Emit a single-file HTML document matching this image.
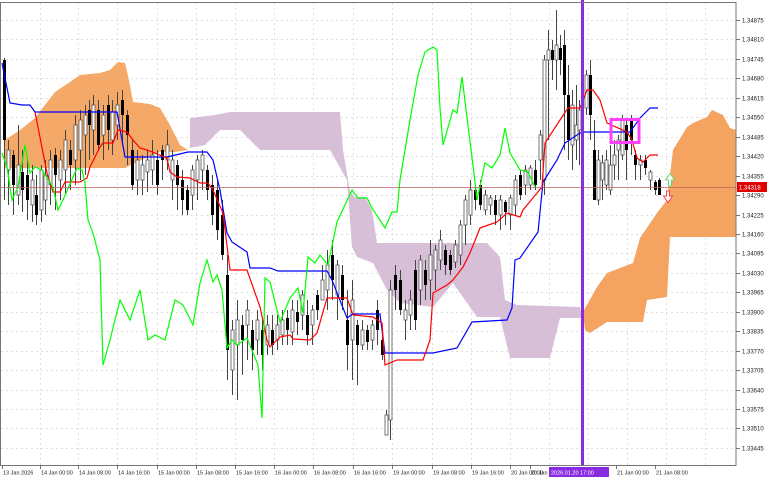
<!DOCTYPE html>
<html><head><meta charset="utf-8"><style>
html,body{margin:0;padding:0;background:#fff;width:768px;height:480px;overflow:hidden}
svg{display:block}
text{font-family:"Liberation Sans",sans-serif;font-size:6px;fill:#222}
text.b{font-size:5.5px}
</style></head><body>
<svg id="c" width="768" height="480" xmlns="http://www.w3.org/2000/svg">
<g id="grid"></g>
<polygon fill="#f4a460" opacity="0.95" points="5,140 20,130 35,118 55,92 70,82 80,75 100,73 110,70 118,62 125,63 129,80 133,102 150,104 160,108 170,125 180,145 188,150 175,152 160,152 150,156 125,168 60,168 5,168"/>
<polygon fill="#d8bfd8" points="190,118 215,115 230,112 340,112 343,150 350,192 355,197 365,197 372,210 377,243 487,243 500,257 505,300 517,305 580,307 582,318 560,318 550,358 510,358 500,317 477,317 453,283 433,307 400,303 387,290 373,263 357,257 352,247 347,180 330,150 260,150 240,130 220,130 205,145 190,148"/>
<polygon fill="#f4a460" points="583,312 597,287 607,273 633,263 640,238 657,213 667,200 673,150 687,127 693,123 707,117 712,110 723,115 730,128 736,130 736,237 670,237 667,297 647,300 643,322 607,322 590,333 585,330"/>
<g id="candles"></g>
<polyline fill="none" stroke="#0000ff" stroke-width="1.2" points="2,63 10,103 22,105 30,105 35,112 117,112 125,157 167,157 188,152 207,152 213,160 220,190 227,233 232,242 247,252 250,268 270,268 278,271 327,271 332,280 347,318 353,314 380,314 385,353 433,353 457,348 472,322 507,320 512,308 515,260 520,258 538,232 543,182 557,160 565,143 580,133 583,132 630,132 640,118 650,108 658,108"/>
<polyline fill="none" stroke="#ff0000" stroke-width="1.2" points="35,112 47,173 53,192 60,192 65,182 80,182 87,178 90,167 100,147 103,143 113,143 118,130 127,132 133,140 140,148 147,150 167,158 170,172 177,177 190,178 200,183 208,183 213,190 223,213 230,270 247,270 260,307 267,340 270,347 280,337 290,335 293,339 310,340 317,333 327,298 347,298 353,315 373,317 382,323 385,365 397,360 423,360 430,340 433,293 447,285 453,280 463,267 470,253 480,228 497,222 507,213 520,217 523,210 537,193 542,187 545,143 560,120 568,108 580,108 587,90 593,90 600,100 607,123 627,132 632,140 637,158 643,162 650,155 658,155"/>
<polyline fill="none" stroke="#00ff00" stroke-width="1.2" points="2,153 7,167 12,200 18,187 25,145 30,173 35,167 42,170 53,187 58,210 63,200 77,168 82,170 85,183 88,220 93,233 100,260 103,365 110,340 120,300 130,320 140,290 148,340 155,335 165,340 175,300 183,305 193,325 200,283 207,260 213,282 217,275 222,290 227,348 232,340 237,345 247,338 258,365 262,418 265,278 270,282 280,322 290,298 298,288 303,313 308,257 315,263 320,255 328,265 337,222 352,190 358,198 367,198 372,208 385,228 392,212 397,212 400,180 410,120 418,75 425,52 433,47 437,50 440,108 443,145 453,110 457,113 462,77 475,182 477,200 485,163 492,168 500,155 505,128 510,153 520,170 528,172 535,187"/>
<line x1="0" y1="187.5" x2="736" y2="187.5" stroke="#b86060" stroke-width="0.8"/>
<rect x="581" y="0" width="3" height="465" fill="#8a2be2"/>
<rect x="611" y="119.5" width="28" height="23" fill="none" stroke="#ff40ff" stroke-width="3"/>
<path d="M668.5,186 L668.5,180 L665.5,180 L670,173.5 L674.5,180 L671.5,180 L671.5,186 Z" fill="#fff" stroke="#6fd66f" stroke-width="1"/>
<path d="M666.5,191 L666.5,196 L663.5,196 L668,202.5 L672.5,196 L669.5,196 L669.5,191 Z" fill="#fff" stroke="#ff4040" stroke-width="1"/>
<rect x="0.5" y="2.5" width="735.5" height="463" fill="none" stroke="#777" stroke-width="1"/>
<g id="axis"></g>
<rect x="737" y="182" width="30" height="10" fill="#e00000"/>
<text x="739" y="189.5" style="fill:#fff">1.34318</text>
<rect x="549" y="467" width="60" height="10" fill="#8a2be2"/>
<text class="b" x="551" y="474.5" style="fill:#fff">2026.01.20 17:00</text>
</svg>
<script>
var NS="http://www.w3.org/2000/svg";
function el(p,t,a){var e=document.createElementNS(NS,t);for(var k in a)e.setAttribute(k,a[k]);p.appendChild(e);return e;}
var g=document.getElementById('grid'),ax=document.getElementById('axis');
var prices=["1.34875","1.34810","1.34745","1.34680","1.34615","1.34550","1.34485","1.34420","1.34355","1.34290","1.34225","1.34160","1.34095","1.34030","1.33965","1.33900","1.33835","1.33770","1.33705","1.33640","1.33575","1.33510","1.33445"];
prices.forEach(function(p,i){var y=Math.round(20+i*19.45)+0.5;
 el(g,'line',{x1:1,y1:y,x2:736,y2:y,stroke:'#d4d4d4','stroke-dasharray':'2,3','stroke-width':0.7});
 el(ax,'line',{x1:736,y1:y,x2:740,y2:y,stroke:'#555','stroke-width':0.8});
 var t=el(ax,'text',{x:742,y:y+2.2});t.textContent=p;});
var xs=[40,78,117,157,196,235,274,313,353,392,432,471,510,549,588,627,666,705];
xs.forEach(function(x){el(g,'line',{x1:x+0.5,y1:3,x2:x+0.5,y2:465,stroke:'#d4d4d4','stroke-dasharray':'2,3','stroke-width':0.7});});
var labs=[[2,"13 Jan 2026"],[40,"14 Jan 00:00"],[78,"14 Jan 08:00"],[117,"14 Jan 16:00"],[157,"15 Jan 00:00"],[196,"15 Jan 08:00"],[235,"15 Jan 16:00"],[274,"16 Jan 00:00"],[313,"16 Jan 08:00"],[353,"16 Jan 16:00"],[392,"19 Jan 00:00"],[432,"19 Jan 08:00"],[471,"19 Jan 16:00"],[510,"20 Jan 00:00"],[530,"20 Jan"],[616,"21 Jan 00:00"],[655,"21 Jan 08:00"]];
labs.forEach(function(l){el(ax,'line',{x1:l[0]+0.5,y1:465,x2:l[0]+0.5,y2:469,stroke:'#555','stroke-width':0.8});var t=el(ax,'text',{x:l[0]+1,y:474.5,'class':'b'});t.textContent=l[1];});
var C=[[4,58,200,60,140,1],[8,140,205,150,170,0],[13,150,215,155,185,1],[18,125,205,165,195,0],[22,150,212,172,190,1],[27,160,220,175,200,1],[32,165,222,180,205,0],[36,175,225,195,215,1],[41,165,222,170,210,0],[45,160,215,175,200,0],[50,150,205,160,185,0],[55,148,210,155,175,1],[60,150,200,160,180,0],[65,130,195,140,170,0],[70,140,190,150,165,1],[75,115,185,125,160,0],[80,110,180,120,150,0],[85,105,175,115,135,0],[89,100,160,110,125,1],[93,95,155,105,130,0],[98,100,150,110,145,1],[103,105,160,115,135,0],[108,95,150,105,130,1],[112,100,155,112,140,0],[117,92,140,105,125,0],[122,90,145,100,115,1],[127,110,165,115,135,1],[132,140,190,150,185,1],[137,150,195,160,180,0],[142,155,195,165,180,0],[147,150,192,160,172,0],[152,140,185,155,170,0],[157,150,195,160,185,1],[162,145,180,150,160,1],[167,130,170,145,160,0],[172,150,200,160,180,0],[177,160,210,165,185,1],[182,170,215,180,200,1],[187,185,215,190,210,1],[192,165,210,170,195,0],[197,155,200,160,180,0],[202,150,190,155,170,0],[207,165,200,170,190,1],[212,175,225,185,215,1],[217,180,240,190,230,1],[222,200,260,215,255,1],[227,255,380,275,350,1],[232,320,395,330,370,0],[237,300,400,320,345,0],[242,315,375,325,340,1],[247,300,360,310,325,0],[252,320,370,330,350,1],[257,310,355,320,340,0],[262,320,370,330,355,1],[267,315,355,325,345,0],[272,315,355,330,345,1],[277,315,350,325,340,0],[282,310,345,320,335,0],[287,310,345,318,330,1],[292,300,345,310,332,0],[297,300,335,312,322,1],[302,290,330,295,315,0],[307,300,345,315,335,1],[312,305,345,310,325,0],[317,290,320,295,310,1],[322,265,300,280,300,0],[327,250,310,265,290,0],[332,240,300,255,280,1],[337,260,320,265,295,0],[342,265,310,275,300,1],[347,290,370,320,345,1],[352,280,380,300,340,0],[357,320,385,325,345,1],[362,320,350,330,345,0],[367,325,350,330,342,1],[372,320,350,325,340,0],[377,300,345,310,330,1],[382,330,360,340,355,1],[386,410,435,415,435,0],[390,280,440,290,420,0],[395,265,310,275,290,1],[400,270,315,280,310,1],[405,300,340,310,320,0],[410,290,330,300,315,0],[415,260,330,270,320,1],[420,255,305,260,290,0],[425,260,300,270,285,1],[430,240,300,255,280,0],[435,245,290,250,270,0],[440,230,270,240,260,0],[445,245,275,250,265,1],[450,250,275,255,270,1],[455,240,268,245,262,0],[460,220,265,225,255,0],[465,195,245,200,225,0],[470,180,225,190,215,0],[475,185,210,190,200,1],[480,180,210,185,205,1],[485,190,215,195,210,0],[490,195,215,198,205,0],[495,195,225,200,215,1],[500,195,230,200,215,0],[505,200,225,202,212,1],[510,195,230,198,215,0],[515,175,215,180,205,0],[520,170,200,175,195,1],[525,165,195,170,185,0],[530,165,190,168,185,0],[535,160,190,170,185,1],[540,130,180,135,160,0],[544,55,195,60,180,0],[548,30,140,50,60,0],[552,40,80,50,60,1],[556,10,90,45,60,0],[560,35,75,48,60,1],[564,30,150,45,95,1],[568,65,160,95,140,1],[572,90,170,105,145,0],[576,85,160,125,140,0],[579,100,165,110,130,0],[586,70,115,75,108,0],[590,60,140,75,115,1],[594,120,200,150,200,1],[598,150,205,160,200,0],[602,155,200,163,180,0],[606,150,190,160,185,0],[610,145,195,165,190,0],[614,140,180,155,165,0],[618,135,180,140,150,0],[622,115,160,120,155,0],[626,120,180,125,150,1],[631,115,155,120,140,1],[635,150,180,155,165,1],[640,155,180,160,165,0],[645,155,175,160,168,1],[650,170,190,172,180,0],[655,180,195,182,190,1],[659,178,195,180,195,1]];
var cg=document.getElementById('candles');
C.forEach(function(c){var x=c[0];
 el(cg,'line',{x1:x+0.5,y1:c[1],x2:x+0.5,y2:c[2],stroke:'#444','stroke-width':1});
 el(cg,'rect',{x:x-1,y:c[3],width:3,height:Math.max(1,c[4]-c[3]),fill:c[5]?'#000':'#fff',stroke:c[5]?'#000':'#555','stroke-width':c[5]?0:0.8});});
</script>
</body></html>
